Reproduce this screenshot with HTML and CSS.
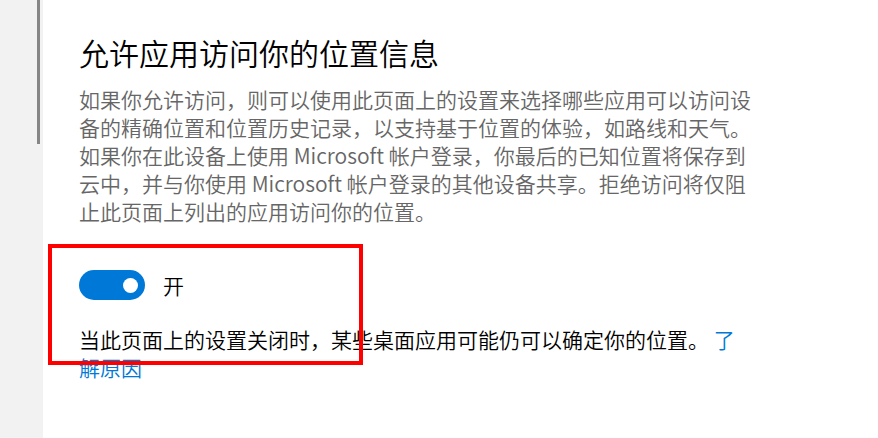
FILE: index.html
```html
<!DOCTYPE html>
<html lang="zh-CN">
<head>
<meta charset="utf-8">
<title>位置</title>
<link rel="stylesheet" href="styles.css">
</head>
<body>
<div class="window">
  <aside class="sidebar">
    <div class="scroll-thumb"></div>
  </aside>
  <main class="content">
    <h1 class="title">允许应用访问你的位置信息</h1>
    <p class="desc">如果你允许访问，则可以使用此页面上的设置来选择哪些应用可以访问设备的精确位置和位置历史记录，以支持基于位置的体验，如路线和天气。如果你在此设备上使用 Microsoft 帐户登录，你最后的已知位置将保存到云中，并与你使用 Microsoft 帐户登录的其他设备共享。拒绝访问将仅阻止此页面上列出的应用访问你的位置。</p>
    <div class="toggle-row">
      <span class="toggle"><span class="knob"></span></span>
      <span class="toggle-label">开</span>
    </div>
    <p class="note">当此页面上的设置关闭时，某些桌面应用可能仍可以确定你的位置。 <a class="link" href="#">了解原因</a></p>
  </main>
  <div class="highlight"></div>
</div>
</body>
</html>
```

FILE: styles.css
```css
html, body {
  margin: 0;
  padding: 0;
  background: #ffffff;
}

body {
  font-family: "Noto Sans CJK SC", "Noto Sans", sans-serif;
  font-weight: 350;
  width: 878px;
  height: 438px;
  overflow: hidden;
}

.window {
  position: relative;
  display: flex;
  width: 878px;
  height: 438px;
}

.sidebar {
  width: 43px;
  flex: 0 0 43px;
  background: #f2f2f2;
}

.scroll-thumb {
  margin-left: 37px;
  width: 3px;
  height: 144px;
  background: #868686;
}

.content {
  flex: 0 0 auto;
  width: 676px;
  padding: 32px 0 0 36px;
}

.title {
  margin: 0;
  font-size: 30px;
  line-height: 40px;
  font-weight: 350;
  color: #000000;
}

.desc {
  margin: 13px 0 0 0;
  font-size: 21px;
  line-height: 28px;
  color: #666666;
}

.toggle-row {
  margin-top: 45px;
  display: flex;
  align-items: center;
  height: 30px;
}

.toggle {
  width: 66px;
  height: 30px;
  border-radius: 15px;
  background: #0078d7;
  display: flex;
  align-items: center;
  justify-content: flex-end;
  padding-right: 7px;
  box-sizing: border-box;
}

.knob {
  width: 15px;
  height: 15px;
  border-radius: 50%;
  background: #ffffff;
}

.toggle-label {
  margin-left: 18px;
  font-size: 21px;
  line-height: 30px;
  color: #000000;
}

.note {
  margin: 25px 0 0 0;
  font-size: 21px;
  line-height: 28px;
  color: #000000;
}

.link {
  color: #0078d7;
  text-decoration: none;
}

.highlight {
  position: absolute;
  left: 48px;
  top: 244px;
  width: 315px;
  height: 121px;
  box-sizing: border-box;
  border: 4px solid #ff0000;
  pointer-events: none;
}
```
